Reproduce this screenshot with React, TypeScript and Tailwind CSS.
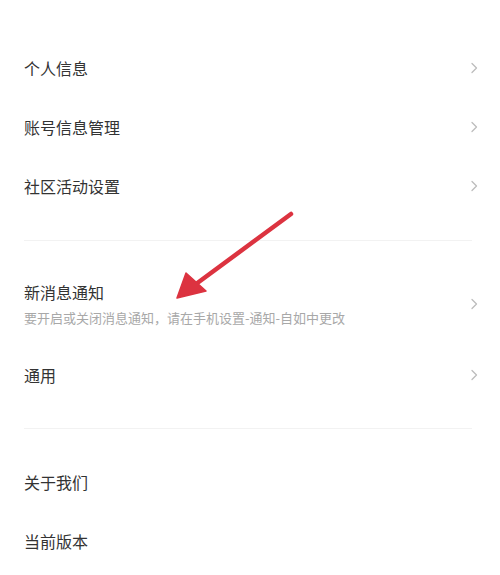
import React from "react";

const font = { fontFamily: '"Noto Sans CJK SC", "Noto Sans", sans-serif' };

function Chevron() {
  return (
    <svg width="8" height="12" viewBox="0 0 8 12" className="shrink-0">
      <path d="M2 1.5 L6.5 6 L2 10.5" fill="none" stroke="#bdbdbd" strokeWidth="1.3" strokeLinecap="round" strokeLinejoin="round" />
    </svg>
  );
}

function Row({ title, chevron = true }: { title: string; chevron?: boolean }) {
  return (
    <div className="h-[59px] flex items-center justify-between pl-6 pr-[22px]">
      <span className="text-[16px] leading-[22px] text-[#333333]">{title}</span>
      {chevron && <Chevron />}
    </div>
  );
}

export default function App() {
  return (
    <div className="relative w-[500px] h-[575px] bg-white overflow-hidden" style={font}>
      <div className="pt-[38px]">
        <Row title="个人信息" />
        <Row title="账号信息管理" />
        <Row title="社区活动设置" />
      </div>
      <div className="mt-[25px] mx-6 w-[448px] h-px bg-[#f2f2f2]" />
      <div className="pt-[40px] pb-[18px] flex items-center justify-between pl-6 pr-[22px]">
        <div className="flex flex-col">
          <span className="text-[16px] leading-[22px] text-[#333333]">新消息通知</span>
          <span className="mt-[6px] text-[13px] leading-[18px] text-[#a8a8a8]">要开启或关闭消息通知，请在手机设置-通知-自如中更改</span>
        </div>
        <Chevron />
      </div>
      <Row title="通用" />
      <div className="mt-[24px] mx-6 w-[448px] h-px bg-[#f2f2f2]" />
      <div className="pt-[23px]">
        <Row title="关于我们" chevron={false} />
        <Row title="当前版本" chevron={false} />
      </div>
      <svg className="absolute left-0 top-0 pointer-events-none" width="500" height="575" viewBox="0 0 500 575">
        <line x1="291" y1="214" x2="196" y2="284" stroke="#dc3340" strokeWidth="4.5" strokeLinecap="round" />
        <polygon points="177,298 186,273 206,291" fill="#dc3340" stroke="#dc3340" strokeWidth="1.5" strokeLinejoin="round" />
      </svg>
    </div>
  );
}
